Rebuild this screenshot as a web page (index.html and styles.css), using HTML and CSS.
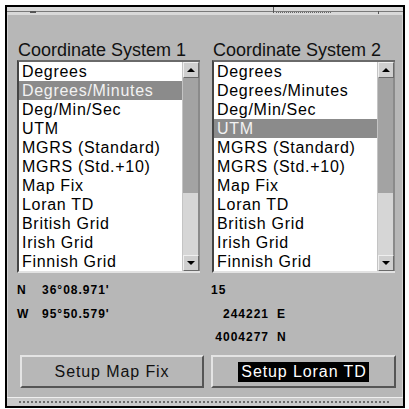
FILE: index.html
```html
<!DOCTYPE html>
<html>
<head>
<meta charset="utf-8">
<link rel="stylesheet" href="styles.css">
</head>
<body>
<div class="screen">
  <div class="top">
    <div class="tline"></div>
    <div class="tmark tm1"></div>
    <div class="tmark tm2"></div>
    <div class="tmark tm3"></div>
    <div class="tdots"></div>
  </div>
  <div class="panel">
    <div class="cols">
      <div class="col">
        <div class="title">Coordinate System 1</div>
        <div class="list">
          <div class="items">
            <div class="item">Degrees</div>
            <div class="item sel">Degrees/Minutes</div>
            <div class="item">Deg/Min/Sec</div>
            <div class="item">UTM</div>
            <div class="item">MGRS (Standard)</div>
            <div class="item">MGRS (Std.+10)</div>
            <div class="item">Map Fix</div>
            <div class="item">Loran TD</div>
            <div class="item">British Grid</div>
            <div class="item">Irish Grid</div>
            <div class="item">Finnish Grid</div>
          </div>
          <div class="scroll">
            <div class="sbtn"><span class="up"></span></div>
            <div class="thumb"></div>
            <div class="track"></div>
            <div class="sbtn"><span class="down"></span></div>
          </div>
        </div>
      </div>
      <div class="col">
        <div class="title">Coordinate System 2</div>
        <div class="list">
          <div class="items">
            <div class="item">Degrees</div>
            <div class="item">Degrees/Minutes</div>
            <div class="item">Deg/Min/Sec</div>
            <div class="item sel">UTM</div>
            <div class="item">MGRS (Standard)</div>
            <div class="item">MGRS (Std.+10)</div>
            <div class="item">Map Fix</div>
            <div class="item">Loran TD</div>
            <div class="item">British Grid</div>
            <div class="item">Irish Grid</div>
            <div class="item">Finnish Grid</div>
          </div>
          <div class="scroll">
            <div class="sbtn"><span class="up"></span></div>
            <div class="thumb"></div>
            <div class="track"></div>
            <div class="sbtn"><span class="down"></span></div>
          </div>
        </div>
      </div>
    </div>
    <div class="coords">
      <div class="cleft">
        <span>N</span><span>36°08.971'</span>
        <span>W</span><span>95°50.579'</span>
      </div>
      <div class="cright">
        <span class="zone">15</span>
        <span class="num">244221</span><span>E</span>
        <span class="num">4004277</span><span>N</span>
      </div>
    </div>
    <div class="buttons">
      <div class="btn b1">Setup Map Fix</div>
      <div class="btn b2"><span class="focus">Setup Loran TD</span></div>
    </div>
  </div>
  <div class="bottom"><div class="bdots"></div></div>
</div>
</body>
</html>
```
FILE: styles.css
```css
html, body {
  margin: 0;
  padding: 0;
  background: #fff;
}
.screen {
  margin: 5px 0 0 5px;
  width: 396px;
  height: 399px;
  border: 2px solid #000;
  display: flex;
  flex-direction: column;
  font-family: "Liberation Sans", Arial, sans-serif;
  color: #000;
}
.top {
  height: 8px;
  background: #d9d9d9;
  position: relative;
}
.tline {
  margin-top: 4px;
  height: 1px;
  background: #7a7a7a;
}
.tmark {
  position: absolute;
  background: #555;
}
.tm1 { left: 23px; top: 4px; width: 6px; height: 2px; }
.tm2 { left: 266px; top: 0; width: 1px; height: 6px; }
.tm3 { left: 371px; top: 4px; width: 1px; height: 3px; }
.tdots {
  position: absolute;
  left: 269px;
  top: 5px;
  width: 55px;
  border-top: 1px dotted #666;
}
.panel {
  flex: 1;
  background: #b7b7b7;
  border-left: 1px solid #d2d2d2;
  border-right: 1px solid #d2d2d2;
  padding: 25px 7px 0 9px;
  display: flex;
  flex-direction: column;
}
.cols {
  display: grid;
  grid-template-columns: 183px 183px;
  column-gap: 12px;
}
.title {
  font-size: 18px;
  line-height: 20px;
  height: 20px;
  padding-left: 1px;
  white-space: nowrap;
  color: #111;
}
.list {
  display: flex;
  height: 209px;
  border-top: 2px solid #6a6a6a;
  border-bottom: 2px solid #e2e2e2;
  border-left: 2px solid #444;
  background: #fff;
}
.items {
  width: 165px;
  background: #fff;
}
.item {
  height: 19px;
  line-height: 19px;
  font-size: 16px;
  letter-spacing: 0.7px;
  padding-left: 3px;
  white-space: nowrap;
  overflow: hidden;
}
.item.sel {
  background: #8b8b8b;
  color: #f2f2f2;
}
.scroll {
  width: 15px;
  border-left: 1px solid #c4c4c4;
  border-right: 2px solid #8a8a8a;
  display: flex;
  flex-direction: column;
  background: #d6d6d6;
}
.sbtn {
  height: 14px;
  background: #cfcfcf;
  border-top: 1px solid #efefef;
  border-left: 1px solid #efefef;
  border-right: 1px solid #6a6a6a;
  border-bottom: 1px solid #6a6a6a;
  display: flex;
  align-items: center;
  justify-content: center;
  box-sizing: content-box;
  margin-right: -2px;
  width: 14px;
}
.up {
  width: 0;
  height: 0;
  border-left: 4px solid transparent;
  border-right: 4px solid transparent;
  border-bottom: 4px solid #000;
}
.down {
  width: 0;
  height: 0;
  border-left: 4px solid transparent;
  border-right: 4px solid transparent;
  border-top: 4px solid #000;
}
.thumb {
  height: 115px;
  background: #a3a3a3;
}
.track {
  flex: 1;
  background: #d6d6d6;
}
.coords {
  margin-top: 6px;
  display: grid;
  grid-template-columns: 183px 183px;
  column-gap: 12px;
  font-size: 12px;
  font-weight: bold;
  letter-spacing: 1px;
  line-height: 23.5px;
  color: #000;
}
.cleft {
  display: grid;
  grid-template-columns: 25px auto;
  grid-auto-rows: 23.5px;
}
.cright {
  display: grid;
  grid-template-columns: 58px auto;
  column-gap: 8px;
  grid-auto-rows: 23.5px;
  margin-left: -1px;
}
.cright .zone {
  grid-column: 1 / 3;
}
.cright .num {
  text-align: right;
}
.buttons {
  margin-top: 5.5px;
  display: grid;
  grid-template-columns: 184px 185px;
  column-gap: 7px;
  margin-left: 3px;
}
.btn {
  height: 29px;
  border-top: 2px solid #e4e4e4;
  border-left: 2px solid #e4e4e4;
  border-right: 2px solid #555;
  border-bottom: 2px solid #555;
  box-sizing: content-box;
  display: flex;
  align-items: center;
  justify-content: center;
  font-size: 16px;
  letter-spacing: 0.9px;
  white-space: nowrap;
  color: #111;
}
.focus {
  background: #000;
  color: #fff;
  line-height: 20px;
  padding: 0 2px 0 3px;
}
.bottom {
  height: 8px;
  background: #c9c9c9;
  border-top: 1px solid #efefef;
}
.bdots {
  margin: 3px 0 0 12px;
  width: 370px;
  height: 0;
  border-top: 2px dotted #6a6a6a;
}
```
